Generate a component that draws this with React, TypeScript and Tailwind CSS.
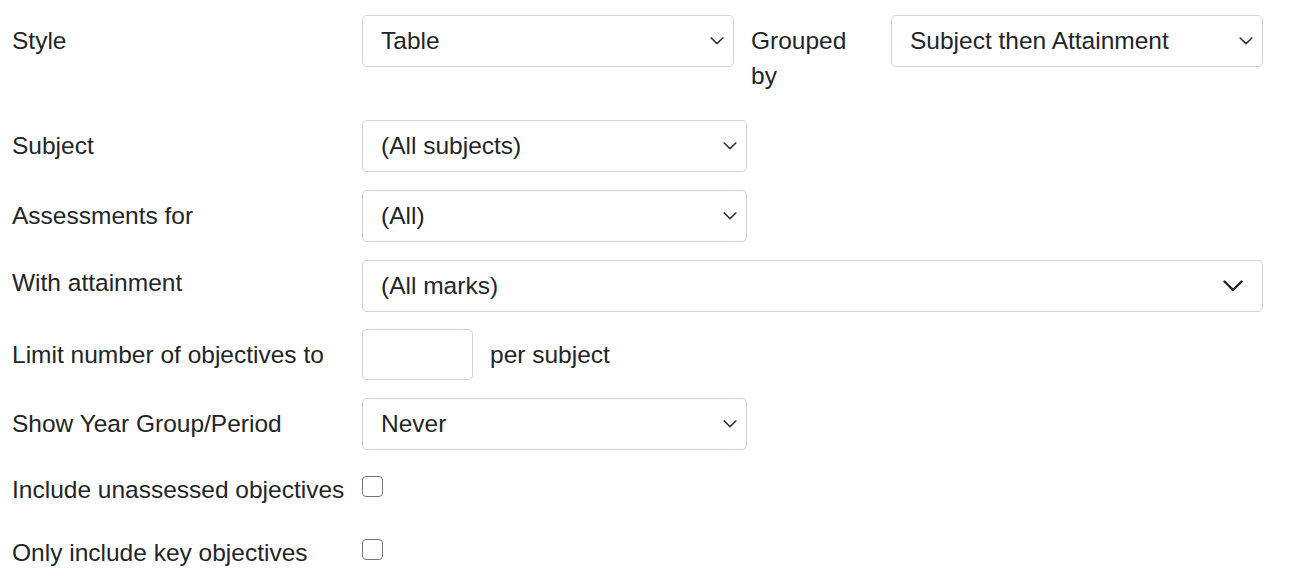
import React from "react";

const font = { fontFamily: '"Liberation Sans", Arial, sans-serif' };

function Chevron({ wide }: { wide?: boolean }) {
  if (wide) {
    return (
      <svg
        className="pointer-events-none absolute right-[20px] top-1/2 -translate-y-1/2"
        width="20"
        height="12"
        viewBox="0 0 20 12"
      >
        <polyline points="1.5,1.5 10,10 18.5,1.5" fill="none" stroke="#222" strokeWidth="2.4" strokeLinecap="round" strokeLinejoin="round" />
      </svg>
    );
  }
  return (
    <svg
      className="pointer-events-none absolute right-[10px] top-1/2 -translate-y-1/2"
      width="14"
      height="9"
      viewBox="0 0 14 9"
    >
      <polyline points="1.2,1.5 7,7.2 12.8,1.5" fill="none" stroke="#343a40" strokeWidth="1.7" strokeLinecap="round" strokeLinejoin="round" />
    </svg>
  );
}

function Select({ value, width, wide }: { value: string; width: string; wide?: boolean }) {
  return (
    <div className={`relative ${width}`}>
      <select
        defaultValue={value}
        className="block h-[52px] w-full appearance-none rounded-[5px] border border-[#ced4da] bg-white px-[18px] py-[7px] text-[24.5px] leading-[36px] text-[#212529] outline-none"
        style={font}
      >
        <option value={value}>{value}</option>
      </select>
      <Chevron wide={wide} />
    </div>
  );
}

function Label({ children, pt = "pt-[8px]" }: { children: React.ReactNode; pt?: string }) {
  return <div className={`w-[350px] shrink-0 ${pt} text-[24.5px] leading-[36px]`}>{children}</div>;
}

function Checkbox() {
  return (
    <input
      type="checkbox"
      className="mt-[8px] h-[21px] w-[21px] appearance-none rounded-[4px] border-[1.5px] border-[#767676] bg-white"
    />
  );
}

export default function App() {
  return (
    <div className="min-h-[582px] bg-white pl-[12px] pt-[15px] text-[#212529]" style={font}>
      <div className="mb-[27px] flex items-start">
        <Label>Style</Label>
        <Select value="Table" width="w-[372px]" />
        <div className="ml-[17px] mr-[18px] w-[122px] shrink-0 pt-[8px] text-[24.5px] leading-[35px]">Grouped by</div>
        <Select value="Subject then Attainment" width="w-[372px]" />
      </div>

      <div className="mb-[18px] flex items-start">
        <Label>Subject</Label>
        <Select value="(All subjects)" width="w-[385px]" />
      </div>

      <div className="mb-[18px] flex items-start">
        <Label>Assessments for</Label>
        <Select value="(All)" width="w-[385px]" />
      </div>

      <div className="mb-[17px] flex items-start">
        <Label pt="pt-[5px]">With attainment</Label>
        <Select value="(All marks)" width="w-[901px]" wide />
      </div>

      <div className="mb-[18px] flex items-start">
        <Label>Limit number of objectives to</Label>
        <input
          type="text"
          className="h-[51px] w-[111px] rounded-[5px] border border-[#ced4da] bg-white px-[18px] text-[24.5px] outline-none"
          style={font}
        />
        <div className="ml-[17px] pt-[8px] text-[24.5px] leading-[36px]">per subject</div>
      </div>

      <div className="mb-[18px] flex items-start">
        <Label>Show Year Group/Period</Label>
        <Select value="Never" width="w-[385px]" />
      </div>

      <div className="mb-[23px] flex items-start">
        <Label pt="pt-[4px]">Include unassessed objectives</Label>
        <Checkbox />
      </div>

      <div className="flex items-start">
        <Label pt="pt-[4px]">Only include key objectives</Label>
        <Checkbox />
      </div>
    </div>
  );
}
